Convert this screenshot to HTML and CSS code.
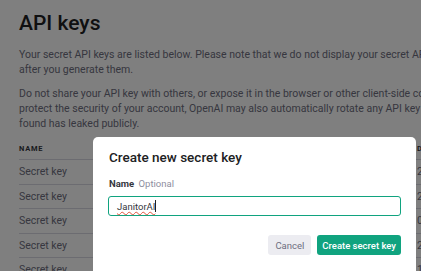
FILE: index.html
```html
<!DOCTYPE html>
<html>
<head>
    <link rel="stylesheet" href="styles.css">
</head>
<body>
    <div class="page">
        <h1>API keys</h1>
        <p>Your secret API keys are listed below. Please note that we do not display your secret API keys again after you generate them.</p>
        <p>Do not share your API key with others, or expose it in the browser or other client-side code. In order to protect the security of your account, OpenAI may also automatically rotate any API key that we've found has leaked publicly.</p>

        <table class="keys">
            <tr>
                <th>NAME</th>
                <th>DATE CREATED</th>
            </tr>
            <tr><td>Secret key</td><td>2023</td></tr>
            <tr><td>Secret key</td><td>2023</td></tr>
            <tr><td>Secret key</td><td>0</td></tr>
            <tr><td>Secret key</td><td>2023</td></tr>
            <tr><td>Secret key</td><td>1</td></tr>
        </table>
    </div>

    <div class="overlay">
        <div class="modal">
            <h2>Create new secret key</h2>
            <label class="field-label">Name <span class="optional">Optional</span></label>
            <div class="input"><span class="typed">JanitorAI</span><span class="caret"></span></div>
            <div class="actions">
                <button class="btn btn-cancel">Cancel</button>
                <button class="btn btn-primary">Create secret key</button>
            </div>
        </div>
    </div>
</body>
</html>
```

FILE: styles.css
```css
html, body {
    margin: 0;
    height: 100%;
    overflow: hidden;
}

body {
    font-family: Roboto, "Noto Sans", sans-serif;
    color: #353740;
    background: #fff;
}

.page {
    padding: 9px 0 0 19px;
    width: 476px;
}

h1 {
    margin: 0 0 10px;
    font-size: 21px;
    font-weight: 500;
    line-height: 28px;
    color: #202123;
}

p {
    margin: 0 0 9px;
    font-size: 10.5px;
    line-height: 15px;
    color: #6e6e80;
}

.keys {
    border-collapse: collapse;
    width: 100%;
    margin-top: 9px;
}

.keys th {
    font-size: 7.5px;
    font-weight: 700;
    letter-spacing: 0.8px;
    text-align: left;
    color: #353740;
    padding: 4px 0 6px;
    border-bottom: 1px solid #d9d9e3;
}

.keys td {
    font-size: 10.5px;
    color: #6e6e80;
    height: 23.5px;
    padding: 0;
    border-bottom: 1px solid #d9d9e3;
}

.keys th:first-child, .keys td:first-child {
    width: 398px;
}

.overlay {
    position: fixed;
    inset: 0;
    background: rgba(0, 0, 0, 0.5);
    padding: 137px 0 0 93px;
}

.modal {
    background: #fff;
    width: 292px;
    height: 200px;
    border-radius: 5px;
    padding: 12px 15px 0 16px;
    box-sizing: content-box;
}

h2 {
    margin: 0 0 13px;
    font-size: 13.5px;
    font-weight: 500;
    color: #202123;
}

.field-label {
    display: block;
    font-size: 9.5px;
    font-weight: 700;
    color: #353740;
    margin-bottom: 7px;
}

.optional {
    font-weight: 400;
    color: #8e8ea0;
    margin-left: 2px;
}

.input {
    display: flex;
    align-items: center;
    height: 18px;
    border: 1.5px solid #10a37f;
    border-radius: 3px;
    padding: 0 8px;
    margin-left: -1px;
    font-size: 9.5px;
    color: #353740;
}

.typed {
    text-decoration: underline wavy #e0533d;
    text-decoration-thickness: 1px;
    text-underline-offset: 1px;
}

.caret {
    display: inline-block;
    width: 1px;
    height: 12px;
    background: #202123;
}

.actions {
    display: flex;
    justify-content: flex-end;
    gap: 6px;
    margin-top: 19px;
}

.btn {
    font-family: inherit;
    font-size: 9.5px;
    border: none;
    border-radius: 3px;
    height: 20px;
}

.btn-cancel {
    background: #ececf1;
    color: #6e6e80;
    padding: 0 7px;
}

.btn-primary {
    background: #10a37f;
    color: #fff;
    font-weight: 500;
    padding: 0 5px;
}
```
